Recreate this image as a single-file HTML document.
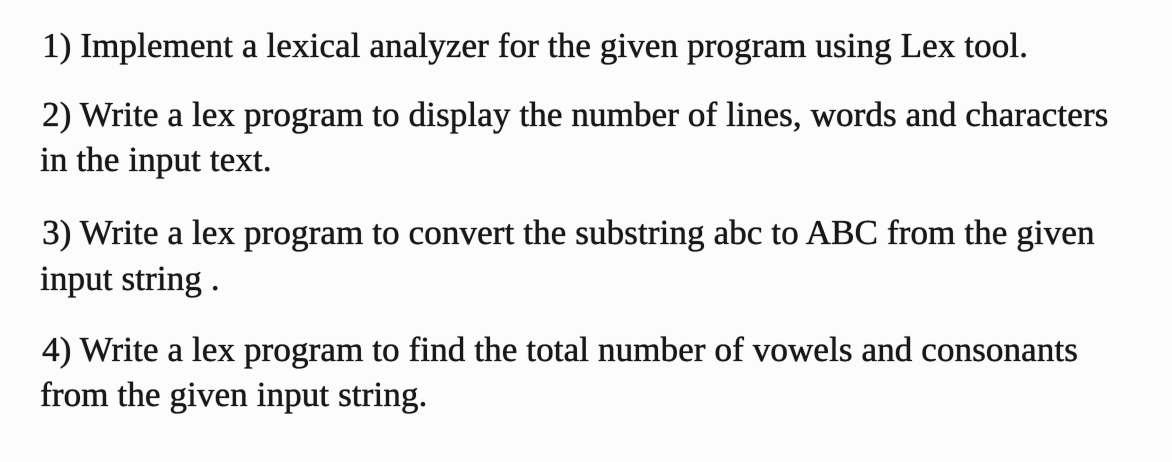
<!DOCTYPE html>
<html><head><meta charset="utf-8"><style>
html,body{margin:0;padding:0;background:#fcfcfc;}
body{width:1172px;height:462px;position:relative;overflow:hidden;font-family:"Liberation Serif",serif;color:#181818;}
.l{position:absolute;white-space:nowrap;font-size:35px;line-height:40px;text-shadow:0 0 1px #181818,0.3px 0 0 #181818;letter-spacing:0.12px;}
</style></head><body>
<div class="l" style="left:42px;top:26px">1) Implement a lexical analyzer for the given program using Lex tool.</div>
<div class="l" style="left:42px;top:95px">2) Write a lex program to display the number of lines, words and characters</div>
<div class="l" style="left:40px;top:140px">in the input text.</div>
<div class="l" style="left:42px;top:213px">3) Write a lex program to convert the substring abc to ABC from the given</div>
<div class="l" style="left:40px;top:259px">input string .</div>
<div class="l" style="left:42px;top:330px">4) Write a lex program to find the total number of vowels and consonants</div>
<div class="l" style="left:40px;top:375px">from the given input string.</div>
</body></html>
